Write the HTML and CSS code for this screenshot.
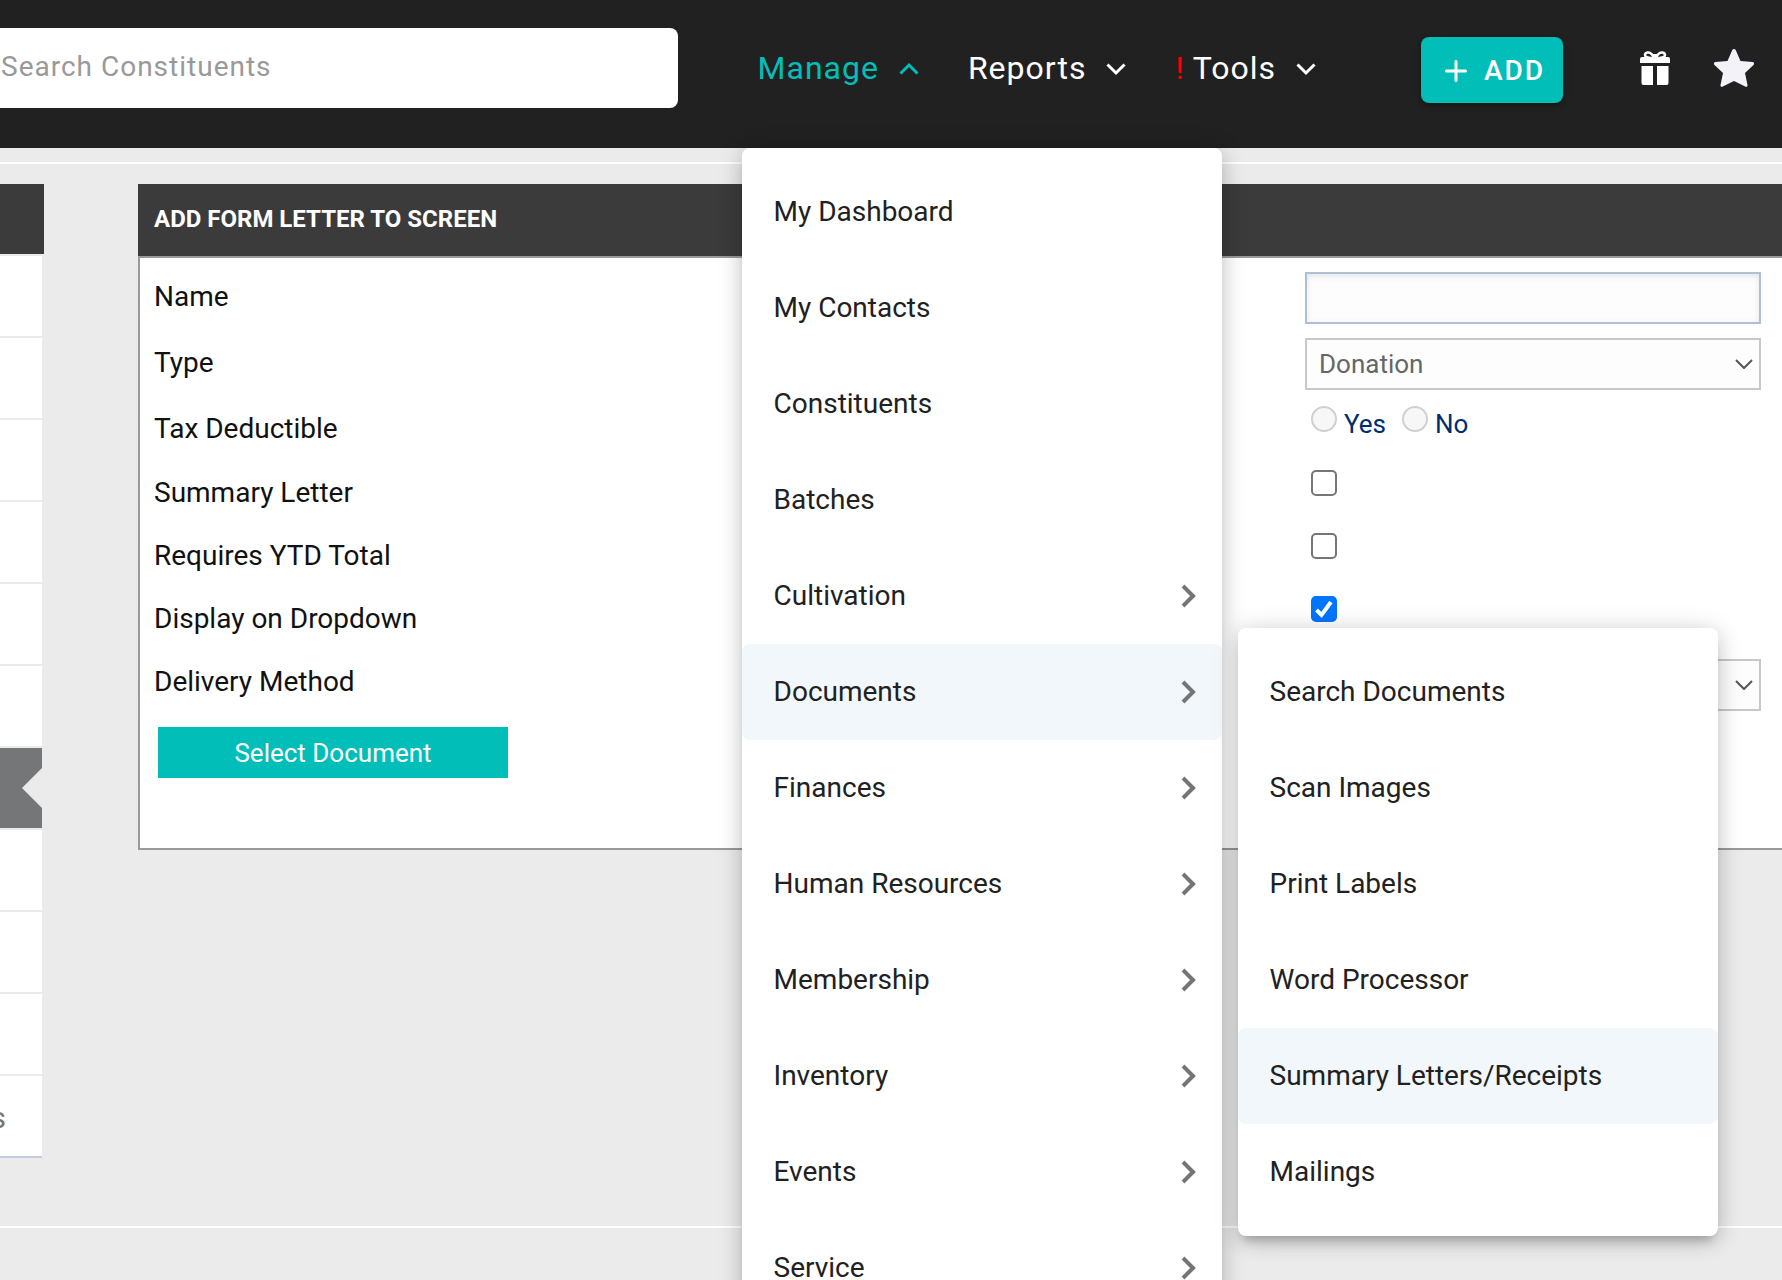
FILE: index.html
```html
<!DOCTYPE html>
<html lang="en">
<head>
<meta charset="utf-8">
<title>Add Form Letter</title>
<link rel="stylesheet" href="styles.css">
</head>
<body>
<div class="app">
  <header class="topbar">
    <input class="search" type="search" placeholder="Search Constituents" aria-label="Search Constituents">
    <nav class="nav">
      <div class="nav-item">
        <button class="nav-button is-open" type="button">Manage
          <svg class="caret" viewBox="0 0 20 12"><path d="M1.5 10.5 10 2l8.500 8.500"/></svg>
        </button>
        <ul class="menu menu-main">
          <li><a class="menu-link" href="#">My Dashboard</a></li>
          <li><a class="menu-link" href="#">My Contacts</a></li>
          <li><a class="menu-link" href="#">Constituents</a></li>
          <li><a class="menu-link" href="#">Batches</a></li>
          <li><a class="menu-link" href="#">Cultivation<svg class="arrow" viewBox="0 0 16 24"><path d="M2 2l10 10L2 22"/></svg></a></li>
          <li class="has-submenu"><a class="menu-link is-active" href="#">Documents<svg class="arrow" viewBox="0 0 16 24"><path d="M2 2l10 10L2 22"/></svg></a>
            <ul class="menu menu-sub">
              <li><a class="menu-link" href="#">Search Documents</a></li>
              <li><a class="menu-link" href="#">Scan Images</a></li>
              <li><a class="menu-link" href="#">Print Labels</a></li>
              <li><a class="menu-link" href="#">Word Processor</a></li>
              <li><a class="menu-link is-active" href="#">Summary Letters/Receipts</a></li>
              <li><a class="menu-link" href="#">Mailings</a></li>
            </ul>
          </li>
          <li><a class="menu-link" href="#">Finances<svg class="arrow" viewBox="0 0 16 24"><path d="M2 2l10 10L2 22"/></svg></a></li>
          <li><a class="menu-link" href="#">Human Resources<svg class="arrow" viewBox="0 0 16 24"><path d="M2 2l10 10L2 22"/></svg></a></li>
          <li><a class="menu-link" href="#">Membership<svg class="arrow" viewBox="0 0 16 24"><path d="M2 2l10 10L2 22"/></svg></a></li>
          <li><a class="menu-link" href="#">Inventory<svg class="arrow" viewBox="0 0 16 24"><path d="M2 2l10 10L2 22"/></svg></a></li>
          <li><a class="menu-link" href="#">Events<svg class="arrow" viewBox="0 0 16 24"><path d="M2 2l10 10L2 22"/></svg></a></li>
          <li><a class="menu-link" href="#">Service<svg class="arrow" viewBox="0 0 16 24"><path d="M2 2l10 10L2 22"/></svg></a></li>
        </ul>
      </div>
      <button class="nav-button" type="button">Reports
        <svg class="caret" viewBox="0 0 20 12"><path d="M1.500 1.500 10 10l8.500-8.500"/></svg>
      </button>
      <button class="nav-button" type="button"><span class="alert">!</span>Tools
        <svg class="caret" viewBox="0 0 20 12"><path d="M1.500 1.500 10 10l8.500-8.500"/></svg>
      </button>
    </nav>
    <button class="add" type="button">
      <svg class="plus" viewBox="0 0 22 22"><path d="M11 1.500v19M1.500 11h19"/></svg>ADD
    </button>
    <button class="icon-button" type="button" aria-label="Gifts">
      <svg class="gift" viewBox="0 0 30 34">
        <path class="bow" d="M14 7C10 7 5 7 5 4 5 1 9.500 .500 11.500 3l2.500 3M16 7c4 0 9 0 9-3 0-3-4.500-3.500-6.500-1L16 6"/>
        <path d="M2 6h26a2 2 0 0 1 2 2v4H0V8a2 2 0 0 1 2-2zM13 3h4v4h-4zM1.500 15H13v19H3.500a2 2 0 0 1-2-2zM17 15h11.500v17a2 2 0 0 1-2 2H17z"/>
      </svg>
    </button>
    <button class="icon-button" type="button" aria-label="Favorites">
      <svg class="star" viewBox="0 0 40 38"><path d="M18.200 1.200a2 2 0 0 1 3.600 0L26.500 12l12 1a1.700 1.700 0 0 1 1 3L31 24l2.500 12a1.500 1.500 0 0 1-2.300 1.600L20 32 8.800 37.600A1.500 1.500 0 0 1 6.500 36L9 24 .500 16a1.700 1.700 0 0 1 1-3l12-1z"/></svg>
    </button>
  </header>

  <div class="content">
    <aside class="side">
      <div class="side-head"></div>
      <ul class="side-list">
        <li></li><li></li><li></li><li></li><li></li><li></li>
        <li class="is-selected"></li>
        <li></li><li></li><li></li>
        <li>s</li>
      </ul>
    </aside>
    <main class="panel">
      <h1 class="panel-title">ADD FORM LETTER TO SCREEN</h1>
      <form class="panel-body">
        <div class="row"><label for="name">Name</label><input class="field field-text" id="name" type="text"></div>
        <div class="row"><label for="type">Type</label><select class="field field-select" id="type"><option>Donation</option></select></div>
        <div class="row" role="radiogroup" aria-labelledby="tax"><span id="tax">Tax Deductible</span>
          <div class="radios">
            <input class="radio" type="radio" name="tax" id="yes"><label for="yes">Yes</label>
            <input class="radio" type="radio" name="tax" id="no"><label for="no">No</label>
          </div>
        </div>
        <div class="row row-short"><label for="summary">Summary Letter</label><input class="check" id="summary" type="checkbox"></div>
        <div class="row row-short"><label for="ytd">Requires YTD Total</label><input class="check" id="ytd" type="checkbox"></div>
        <div class="row row-short"><label for="display">Display on Dropdown</label><input class="check" id="display" type="checkbox" checked></div>
        <div class="row row-short"><label for="delivery">Delivery Method</label><select class="field field-select" id="delivery"><option></option></select></div>
        <button class="select-doc" type="button">Select Document</button>
      </form>
    </main>
  </div>
</div>
</body>
</html>
```
FILE: styles.css
```css
* { box-sizing: border-box; }

body {
  margin: 0;
  background: #ebebeb;
  color: #111;
  font-family: Roboto, "Liberation Sans", sans-serif;
  font-size: 28px;
}

button, input, select { font: inherit; }
button { border: 0; padding: 0; background: none; }
ul { list-style: none; margin: 0; padding: 0; }

.app { height: 100vh; overflow: hidden; }

/* Top bar */
.topbar {
  position: relative;
  z-index: 2;
  display: flex;
  align-items: flex-start;
  height: 148px;
  padding-right: 28px;
  background: #212121;
}

.search {
  flex: 1;
  min-width: 0;
  height: 80px;
  margin-top: 28px;
  padding: 0 0 4px 1px;
  border: 0;
  border-radius: 0 8px 8px 0;
  background: #fff;
  letter-spacing: 1px;
}
.search::placeholder { color: #999; }

.nav { display: flex; gap: 49px; margin-left: 64px; }
.nav-item { position: relative; padding-left: 16px; }
.nav-button {
  display: flex;
  align-items: center;
  height: 136px;
  color: #fff;
  font-size: 32px;
  letter-spacing: 1px;
}
.nav-button.is-open { color: #02beb8; }
.caret { width: 20px; height: 12px; margin: 2px 0 0 20px; overflow: visible; }
.caret path { fill: none; stroke: currentColor; stroke-width: 3; }
.alert { margin-right: 8px; color: #f00; }

.add {
  display: flex;
  align-items: center;
  justify-content: center;
  gap: 17px;
  width: 142px;
  height: 66px;
  margin: 37px 77px 0 105px;
  padding-left: 6px;
  border-radius: 8px;
  background: #02beb8;
  box-shadow: 0 2px 6px rgba(0, 0, 0, .4);
  color: #fff;
  font-weight: 500;
  letter-spacing: 2px;
}
.plus { width: 22px; height: 22px; margin-top: 2px; }
.plus path { stroke: #fff; stroke-width: 3; stroke-linecap: round; }

.icon-button { display: flex; align-items: center; height: 136px; }
.icon-button + .icon-button { margin-left: 44px; }
.gift { width: 30px; height: 34px; fill: #fff; }
.gift .bow { fill: none; stroke: #fff; stroke-width: 2.5; }
.star { width: 40px; height: 38px; fill: #f4f2f9; }

/* Drop-down menus */
.menu {
  position: absolute;
  width: 480px;
  padding: 16px 0;
  border-radius: 8px;
  background: #fff;
  box-shadow: 0 10px 10px -6px rgba(0, 0, 0, .2), 0 6px 20px rgba(0, 0, 0, .14), 0 2px 28px rgba(0, 0, 0, .12);
}
.menu-main { top: 148px; left: 0; }
.menu-sub { top: -16px; left: calc(100% + 16px); }
.has-submenu { position: relative; }
.menu-link {
  display: flex;
  align-items: center;
  justify-content: space-between;
  height: 96px;
  padding: 0 25px 2px 32px;
  border-radius: 8px;
  color: #212121;
  text-decoration: none;
}
.menu-link.is-active { background: #f2f7fc; }
.arrow { width: 16px; height: 24px; margin-top: 2px; }
.arrow path { fill: none; stroke: #757575; stroke-width: 4; }

/* Page body */
.content {
  display: flex;
  align-items: flex-start;
  gap: 94px;
  height: 1066px;
  margin-top: 14px;
  padding-top: 20px;
  border: solid #fff;
  border-width: 2px 0;
}

.side { width: 44px; }
.side-head { height: 70px; background: #3b3b3b; }
.side-list { width: 42px; border-bottom: 2px solid #c3cde2; }
.side-list li {
  height: 82px;
  padding-right: 36px;
  border-top: 2px solid #ebebeb;
  background: #fff;
  color: #757575;
  font-size: 30px;
  line-height: 84px;
  direction: rtl;
}
.side-list .is-selected {
  background: #757678;
  clip-path: polygon(0 0, 100% 0, 100% 22px, 22px 42px, 100% 62px, 100% 100%, 0 100%);
}

.panel { flex: 1; }
.panel-title {
  height: 72px;
  margin: 0;
  padding-left: 16px;
  background: #3b3b3b;
  color: #fff;
  font-size: 24px;
  font-weight: 700;
  line-height: 70px;
}
.panel-body {
  padding: 5px 21px 70px 14px;
  border: 2px solid #999;
  border-right: 0;
  background: #fff;
}
.row {
  display: grid;
  grid-template-columns: 1fr 456px;
  align-items: center;
  height: 66px;
}
.row-short { height: 63px; }
.row > :last-child { align-self: start; margin-top: 9px; }

.field { width: 100%; height: 52px; border: 2px solid #c8c8c8; border-radius: 0; background: #fdfdfd; }
.field-text { border-color: #afbfd5; box-shadow: inset 0 2px 6px rgba(0, 0, 0, .1); }
.field-select {
  appearance: none;
  padding: 0 12px;
  background: #fdfdfd url("data:image/svg+xml,%3Csvg xmlns='http://www.w3.org/2000/svg' viewBox='0 0 18 10'%3E%3Cpath d='M1 1l8 8 8-8' fill='none' stroke='%23555' stroke-width='2'/%3E%3C/svg%3E") no-repeat right 6px center / 18px 10px;
  color: #666;
  font-size: 26px;
}

.radios { display: flex; align-items: flex-start; padding-left: 6px; color: #002d6e; font-size: 26px; line-height: 40px; }
.radios label { margin: 0 16px 0 7px; }
.radio {
  appearance: none;
  width: 26px;
  height: 26px;
  margin: 2px 0 0;
  border: 2px solid #d0d0d0;
  border-radius: 50%;
  background: #f7f7f7;
}
.check {
  appearance: none;
  width: 26px;
  height: 26px;
  margin: 0 0 0 6px;
  border: 2px solid #767676;
  border-radius: 5px;
  background: #fff;
}
.check:checked {
  border-color: #0075ff;
  background: #0075ff url("data:image/svg+xml,%3Csvg xmlns='http://www.w3.org/2000/svg' viewBox='0 0 22 22'%3E%3Cpath d='M3.500 12l5 5L18 4' fill='none' stroke='%23fff' stroke-width='4'/%3E%3C/svg%3E") no-repeat center / 22px 22px;
}

.select-doc {
  display: block;
  width: 350px;
  height: 51px;
  margin: 14px 0 0 4px;
  background: #02beb8;
  color: #fff;
  font-size: 26px;
}
```
